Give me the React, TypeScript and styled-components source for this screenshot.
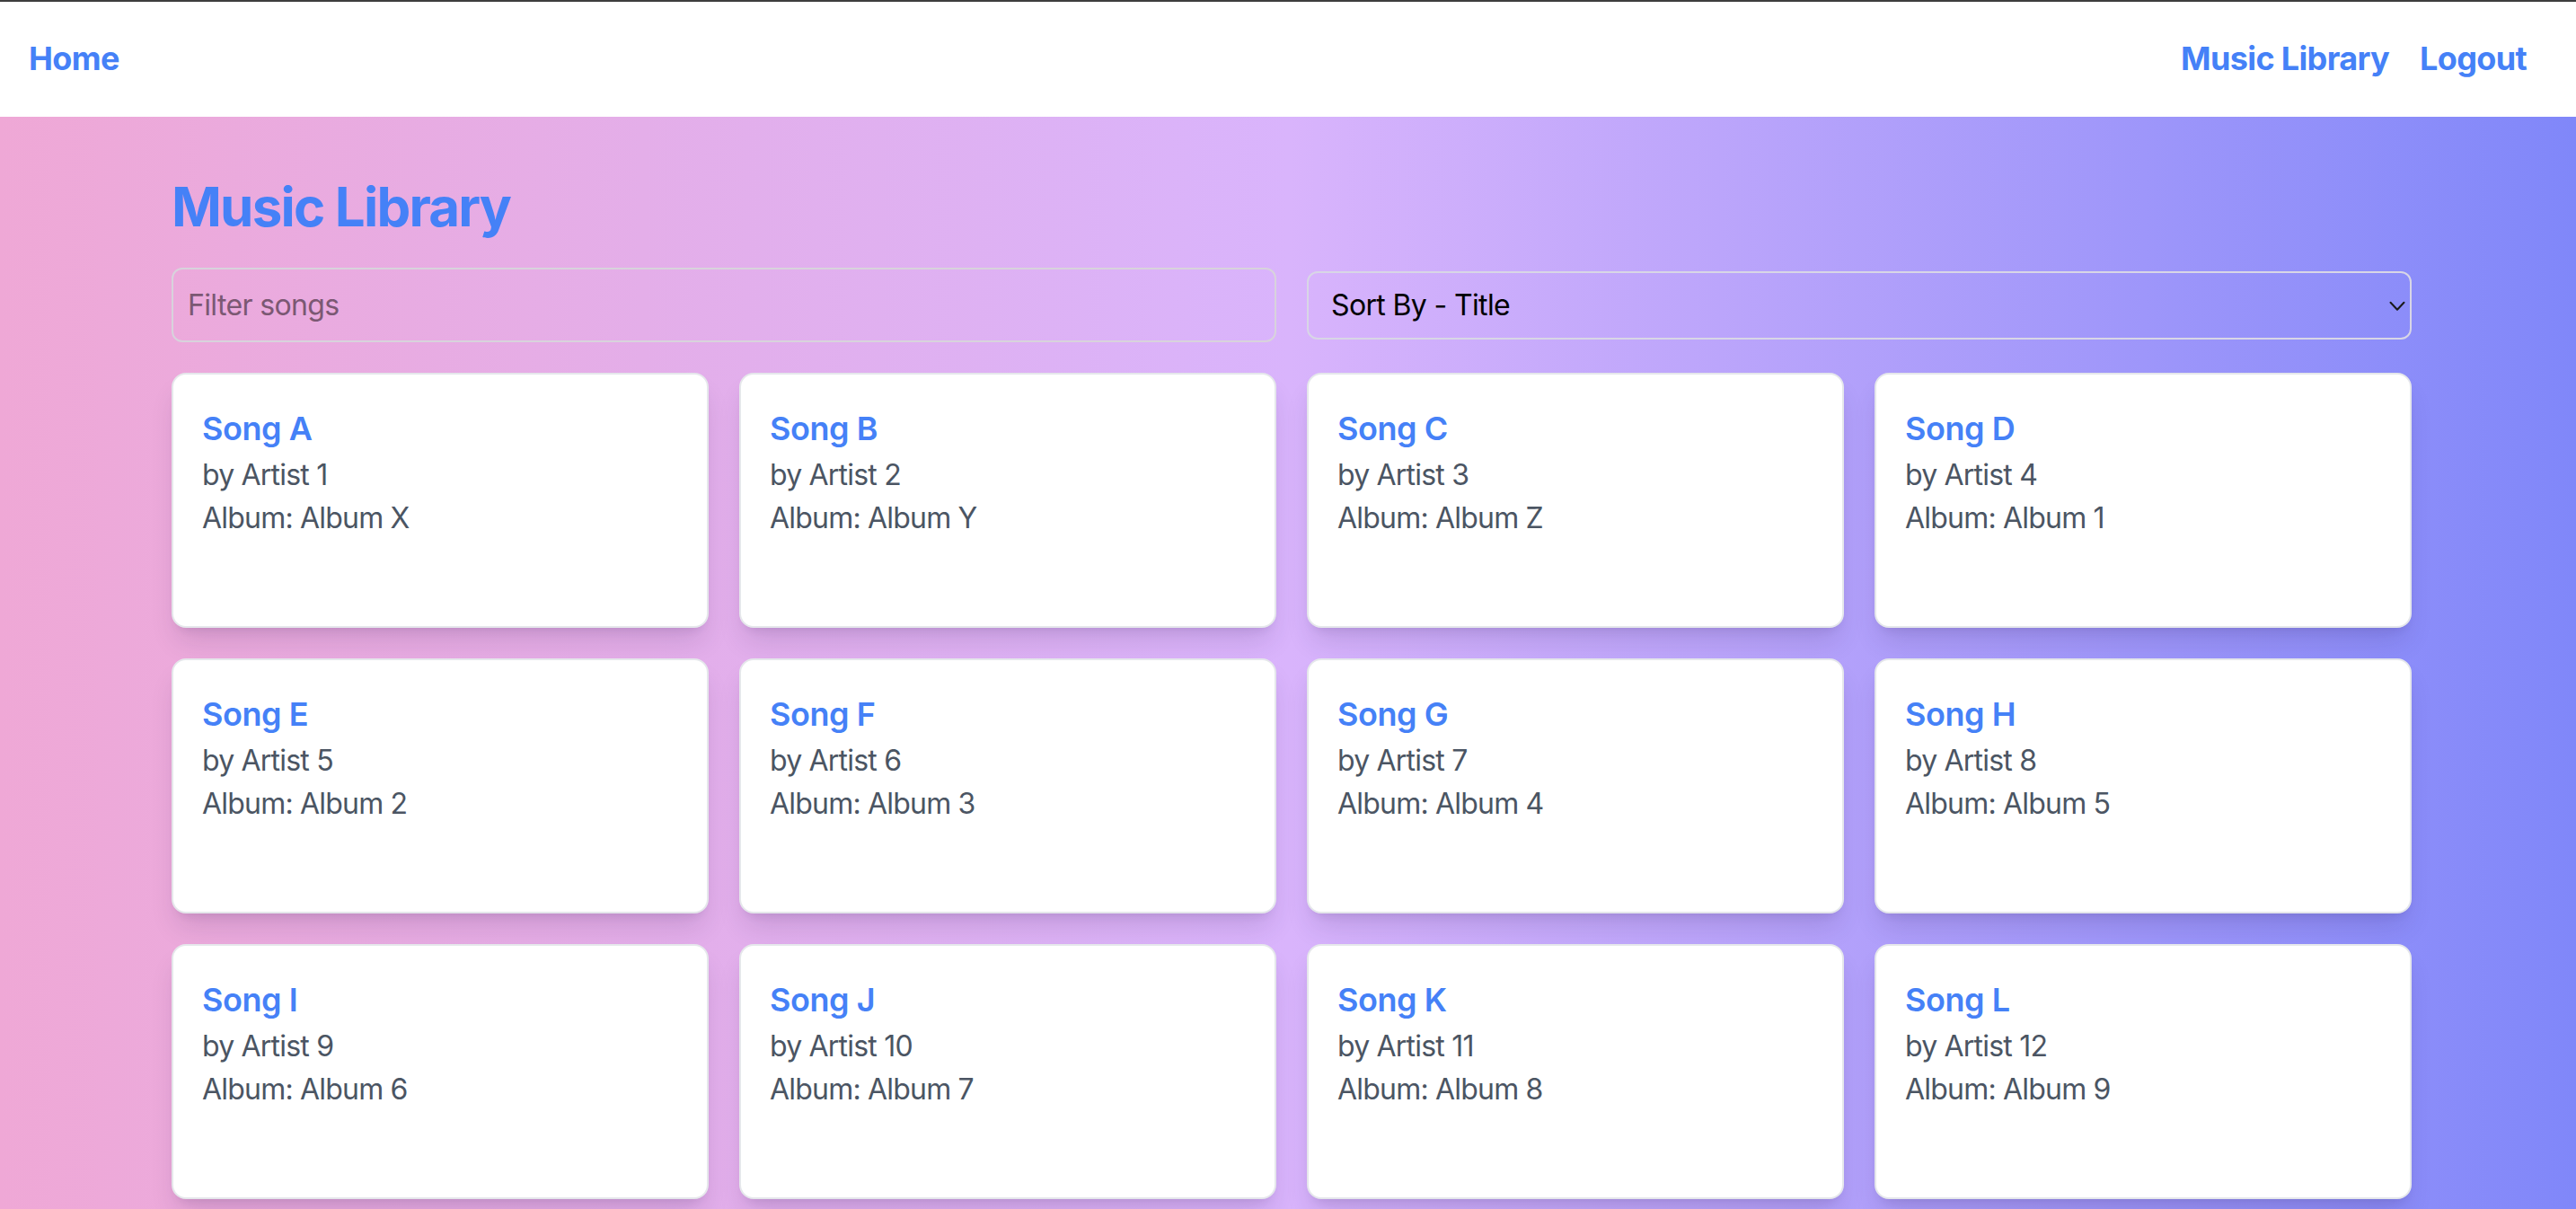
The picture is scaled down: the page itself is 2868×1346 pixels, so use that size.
import React from "react";
import styled, { createGlobalStyle } from "styled-components";

const GlobalStyle = createGlobalStyle`
  html, body {
    margin: 0;
    padding: 0;
  }
  body {
    font-family: Inter, "Noto Sans", "Liberation Sans", sans-serif;
    background: #ffffff;
  }
  * { box-sizing: border-box; }
`;

const Page = styled.div`
  min-height: 100vh;
  display: flex;
  flex-direction: column;
  background: linear-gradient(to right, #efa8d6 0%, #d9b4fc 50%, #8087f9 100%);
`;

const NavBar = styled.nav`
  height: 130px;
  background: #ffffff;
  border-top: 2px solid #3d3d3d;
  display: flex;
  align-items: center;
  justify-content: space-between;
  padding: 0 55px 0 32px;
`;

const NavLinks = styled.div`
  display: flex;
  align-items: center;
  gap: 34px;
`;

const NavLink = styled.a`
  font-size: 36px;
  line-height: 1.2;
  font-weight: 700;
  letter-spacing: -0.018em;
  color: #4581f7;
  text-decoration: none;
  cursor: pointer;
`;

const Main = styled.main`
  flex: 1;
  padding: 64px 183px 0 191px;
`;

const Heading = styled.h1`
  margin: 0 0 32px;
  font-size: 60px;
  line-height: 72px;
  font-weight: 700;
  letter-spacing: -0.03em;
  color: #4581f7;
`;

const Controls = styled.div`
  display: grid;
  grid-template-columns: 1fr 1fr;
  column-gap: 34px;
  align-items: center;
  margin-bottom: 34px;
`;

const FilterInput = styled.input`
  height: 83px;
  width: 100%;
  border: 2px solid #d8d3dc;
  border-radius: 12px;
  background: transparent;
  padding: 0 16px;
  font-family: inherit;
  font-size: 32px;
  letter-spacing: -0.02em;
  color: #222;
  outline: none;
  &::placeholder {
    color: #7b5873;
  }
`;

const SelectWrap = styled.div`
  position: relative;
`;

const SortSelect = styled.select`
  appearance: none;
  -webkit-appearance: none;
  height: 76px;
  width: 100%;
  border: 2px solid #d8d6e6;
  border-radius: 12px;
  background: transparent;
  padding: 0 25px;
  font-family: inherit;
  font-size: 32px;
  letter-spacing: -0.02em;
  color: #000;
  outline: none;
`;

const Chevron = styled.svg`
  position: absolute;
  right: 7px;
  top: 50%;
  width: 18px;
  height: 12px;
  transform: translateY(-40%);
  pointer-events: none;
`;

const CardGrid = styled.div`
  display: grid;
  grid-template-columns: repeat(4, 1fr);
  gap: 34px;
`;

const Card = styled.div`
  background: #ffffff;
  border: 2px solid #e5e7eb;
  border-radius: 16px;
  padding: 32px;
  height: 284px;
  box-shadow: 0 20px 30px -6px rgba(40, 20, 80, 0.14),
    0 8px 12px -8px rgba(40, 20, 80, 0.14);
`;

const SongTitle = styled.h2`
  margin: 0;
  font-size: 36px;
  line-height: 56px;
  font-weight: 600;
  letter-spacing: -0.012em;
  color: #4581f7;
`;

const Meta = styled.p`
  margin: 0;
  font-size: 32px;
  line-height: 48px;
  letter-spacing: -0.025em;
  color: #4b5563;
`;

const albums = ["X", "Y", "Z", "1", "2", "3", "4", "5", "6", "7", "8", "9"];
const songs = albums.map((album, i) => ({
  title: `Song ${String.fromCharCode(65 + i)}`,
  artist: `Artist ${i + 1}`,
  album: `Album ${album}`,
}));

export default function App() {
  return (
    <>
      <GlobalStyle />
      <Page>
        <NavBar>
          <NavLink>Home</NavLink>
          <NavLinks>
            <NavLink>Music Library</NavLink>
            <NavLink>Logout</NavLink>
          </NavLinks>
        </NavBar>
        <Main>
          <Heading>Music Library</Heading>
          <Controls>
            <FilterInput placeholder="Filter songs" />
            <SelectWrap>
              <SortSelect defaultValue="title">
                <option value="title">Sort By - Title</option>
                <option value="artist">Sort By - Artist</option>
                <option value="album">Sort By - Album</option>
              </SortSelect>
              <Chevron viewBox="0 0 18 12" fill="none">
                <path
                  d="M1.5 1.5 L9 9.5 L16.5 1.5"
                  stroke="#1a1a1a"
                  strokeWidth="2"
                  strokeLinecap="round"
                  strokeLinejoin="round"
                />
              </Chevron>
            </SelectWrap>
          </Controls>
          <CardGrid>
            {songs.map((s) => (
              <Card key={s.title}>
                <SongTitle>{s.title}</SongTitle>
                <Meta>by {s.artist}</Meta>
                <Meta>Album: {s.album}</Meta>
              </Card>
            ))}
          </CardGrid>
        </Main>
      </Page>
    </>
  );
}
